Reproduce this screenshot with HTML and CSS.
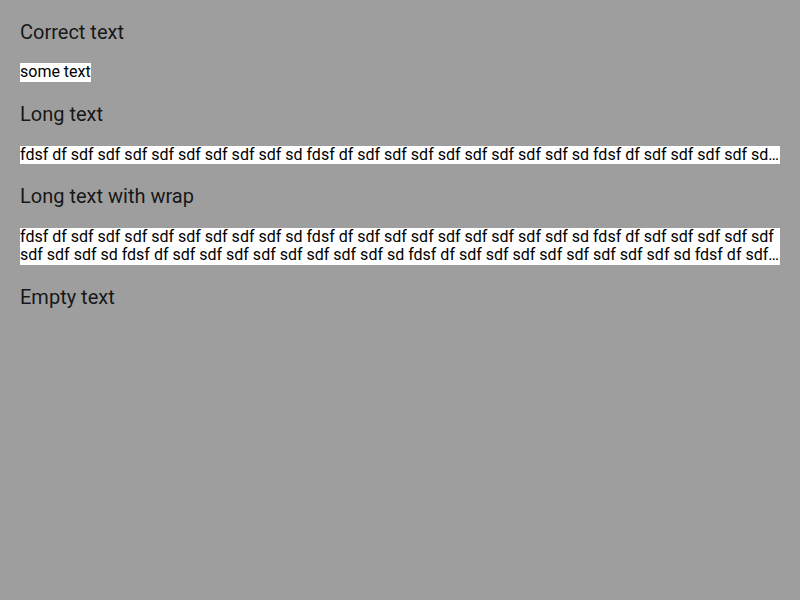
FILE: index.html
```html
<!DOCTYPE html>
<html>
<head>
<meta charset="utf-8">
<link rel="stylesheet" href="styles.css">
</head>
<body>
<div class="page">
  <h2 class="title">Correct text</h2>
  <div class="row"><span class="txt">some text</span></div>
  <h2 class="title">Long text</h2>
  <div class="txt ellipsis">fdsf df sdf sdf sdf sdf sdf sdf sdf sdf sd fdsf df sdf sdf sdf sdf sdf sdf sdf sdf sd fdsf df sdf sdf sdf sdf sdf sdf sdf sdf sd fdsf df sdf sdf sdf sdf sdf sdf sdf sdf sd fdsf df sdf sdf sdf sdf sdf sdf sdf sdf sd</div>
  <h2 class="title">Long text with wrap</h2>
  <div class="txt clamp">fdsf df sdf sdf sdf sdf sdf sdf sdf sdf sd fdsf df sdf sdf sdf sdf sdf sdf sdf sdf sd fdsf df sdf sdf sdf sdf sdf sdf sdf sdf sd fdsf df sdf sdf sdf sdf sdf sdf sdf sdf sd fdsf df sdf sdf sdf sdf sdf sdf sdf sdf sd fdsf df sdf sdf sdf sdf sdf sdf sdf sdf sd fdsf df sdf sdf sdf sdf sdf sdf sdf sdf sd fdsf df sdf sdf sdf sdf sdf sdf sdf sdf sd</div>
  <h2 class="title">Empty text</h2>
  <div class="txt"></div>
</div>
</body>
</html>
```

FILE: styles.css
```css
html, body {
  margin: 0;
  padding: 0;
  background: #9e9e9e;
  width: 800px;
  height: 600px;
  overflow: hidden;
}
.page {
  box-sizing: border-box;
  padding: 20px;
  display: flex;
  flex-direction: column;
  gap: 20px;
  font-family: Roboto, "Liberation Sans", sans-serif;
}
.title {
  margin: 0;
  font-size: 20px;
  font-weight: 400;
  line-height: normal;
  height: 23.4px;
  color: rgba(0, 0, 0, 0.87);
}
.row {
  display: flex;
}
.txt {
  background: #fff;
  color: #000;
  font-size: 16px;
  line-height: 18.75px;
}
.ellipsis {
  white-space: nowrap;
  overflow: hidden;
  text-overflow: ellipsis;
}
.clamp {
  display: -webkit-box;
  -webkit-box-orient: vertical;
  -webkit-line-clamp: 2;
  overflow: hidden;
}
```
